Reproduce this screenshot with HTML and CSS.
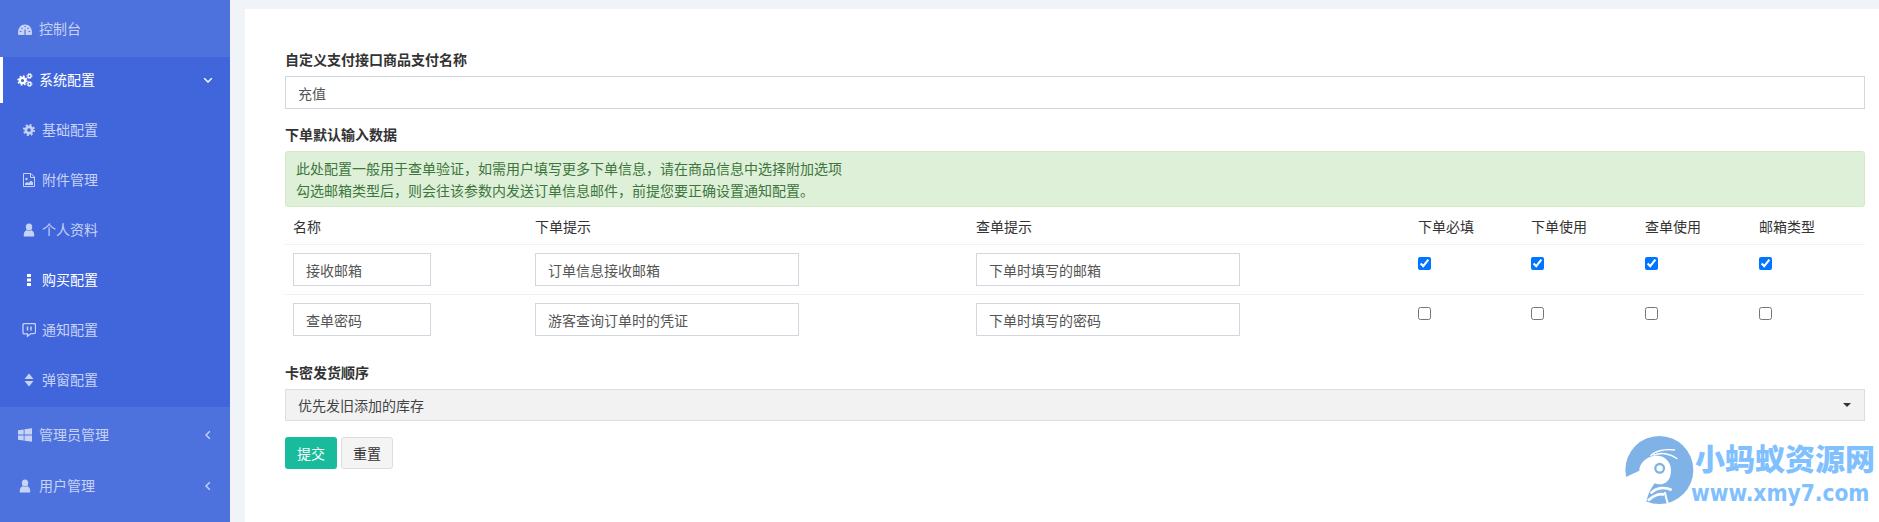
FILE: index.html
```html
<!DOCTYPE html>
<html lang="zh-CN">
<head>
<meta charset="utf-8">
<title>购买配置</title>
<link rel="stylesheet" href="styles.css">
</head>
<body>
<svg class="defs" width="0" height="0" aria-hidden="true">
  <symbol id="i-gear" viewBox="-1 -1 16 16">
    <circle cx="7" cy="7" r="3.6" fill="none" stroke="currentColor" stroke-width="3"/>
    <circle cx="7" cy="7" r="5.8" fill="none" stroke="currentColor" stroke-width="2.2" stroke-dasharray="2.3 2.25"/>
  </symbol>
  <symbol id="i-user" viewBox="0 0 14 14">
    <ellipse cx="7" cy="4" rx="3.2" ry="3.6" fill="currentColor"/>
    <path d="M2 13.5C1.5 13.5 1.8 10 2.6 8.8C3.2 7.9 4.2 7.2 5 7.2C6 8.2 8 8.2 9 7.2C9.8 7.2 10.8 7.9 11.4 8.8C12.2 10 12.500 13.5 12 13.5Z" fill="currentColor"/>
  </symbol>
  <symbol id="i-left" viewBox="0 0 10 10">
    <path d="M6.8 1.200L3 5L6.800 8.800" fill="none" stroke="currentColor" stroke-width="1.400"/>
  </symbol>
</svg>

<div class="app">
  <nav class="sidebar">
    <ul class="menu">
      <li class="item item-first">
        <svg class="ico" viewBox="0 0 14 14"><path d="M0 11C0 5.500 3 2.500 7 2.500s7 3 7 8.500c0 .8-.2 1.300-.6 2H.6C.2 12.300 0 11.800 0 11Z" fill="currentColor"/><path d="M7 13V7.500M1.800 9.500h1.600M3.500 5.800l1 1M10.500 5.800l-1 1M10.600 9.500h1.600M7 4v1.200" stroke="#4e72dd" stroke-width="1.200" fill="none"/></svg>
        <span class="text">控制台</span>
      </li>
      <li class="item item-open">
        <svg class="ico ico-cogs" viewBox="0 0 16 14"><use href="#i-gear" x="-.5" y="1.500" width="12" height="12"/><use href="#i-gear" x="9" y="-.5" width="7" height="7"/><use href="#i-gear" x="9" y="7.500" width="7" height="7"/></svg>
        <span class="text">系统配置</span>
        <svg class="caret" viewBox="0 0 10 10"><path d="M1.200 3.200L5 7L8.800 3.200" fill="none" stroke="currentColor" stroke-width="1.400"/></svg>
      </li>
      <li class="sub">
        <ul class="submenu">
          <li class="sub-item"><svg class="ico"><use href="#i-gear"/></svg><span class="text">基础配置</span></li>
          <li class="sub-item">
            <svg class="ico" viewBox="0 0 14 14"><path d="M1.500 .500H9L12.500 4V13.500H1.500Z" fill="none" stroke="currentColor"/><path d="M8.500 .500V4.500H12.500" fill="none" stroke="currentColor"/><circle cx="4.500" cy="6" r="1.200" fill="currentColor"/><path d="M3 12V10.500L5 9L6.500 10L9 7.500L11 9.500V12Z" fill="currentColor"/></svg>
            <span class="text">附件管理</span>
          </li>
          <li class="sub-item"><svg class="ico"><use href="#i-user"/></svg><span class="text">个人资料</span></li>
          <li class="sub-item sub-current">
            <svg class="ico" viewBox="0 0 14 14"><path d="M5 1H9V4H5ZM5 5.500H9V8.500H5ZM5 10H9V13H5Z" fill="currentColor"/></svg>
            <span class="text">购买配置</span>
          </li>
          <li class="sub-item">
            <svg class="ico" viewBox="0 0 14 14"><path d="M1 1.500Q1 .7 1.800 .7H12.500Q13.500 .7 13.500 1.700V9Q13.500 10 12.700 10.300L8.500 10.800L5.500 13.300V10.800H2.500Q1 10.800 1 9.300Z" fill="none" stroke="currentColor" stroke-width="1.300"/><path d="M5.500 3.500V7.500M9 3.500V7.500" stroke="currentColor" stroke-width="1.500"/></svg>
            <span class="text">通知配置</span>
          </li>
          <li class="sub-item">
            <svg class="ico" viewBox="0 0 14 14"><path d="M7 .500L11.500 6H2.500ZM2.500 8H11.500L7 13.500Z" fill="currentColor"/></svg>
            <span class="text">弹窗配置</span>
          </li>
        </ul>
      </li>
      <li class="item item-tall">
        <svg class="ico" viewBox="0 0 14 14"><path d="M0 2.200L5.700 1.400V6.600H0ZM6.500 1.300L14 .200V6.600H6.500ZM0 7.400H5.700V12.600L0 11.800ZM6.500 7.400H14V13.800L6.500 12.700Z" fill="currentColor"/></svg>
        <span class="text">管理员管理</span>
        <svg class="caret"><use href="#i-left"/></svg>
      </li>
      <li class="item">
        <svg class="ico"><use href="#i-user"/></svg>
        <span class="text">用户管理</span>
        <svg class="caret"><use href="#i-left"/></svg>
      </li>
    </ul>
  </nav>

  <main class="card">
    <form class="form">
      <div class="field field-name">
        <label class="label" for="pay-name">自定义支付接口商品支付名称</label>
        <input class="control" id="pay-name" type="text" value="充值">
      </div>

      <div class="field field-table">
        <div class="label">下单默认输入数据</div>
        <div class="alert">
          <div>此处配置一般用于查单验证，如需用户填写更多下单信息，请在商品信息中选择附加选项</div>
          <div>勾选邮箱类型后，则会往该参数内发送订单信息邮件，前提您要正确设置通知配置。</div>
        </div>
        <table class="table">
          <colgroup>
            <col class="col-name"><col class="col-hint"><col class="col-hint-wide"><col class="col-first"><col class="col-check"><col class="col-check"><col class="col-check">
          </colgroup>
          <thead>
            <tr><th>名称</th><th>下单提示</th><th>查单提示</th><th>下单必填</th><th>下单使用</th><th>查单使用</th><th>邮箱类型</th></tr>
          </thead>
          <tbody>
            <tr>
              <td><input class="control" type="text" value="接收邮箱"></td>
              <td><input class="control" type="text" value="订单信息接收邮箱"></td>
              <td><input class="control" type="text" value="下单时填写的邮箱"></td>
              <td><input class="check" type="checkbox" checked></td>
              <td><input class="check" type="checkbox" checked></td>
              <td><input class="check" type="checkbox" checked></td>
              <td><input class="check" type="checkbox" checked></td>
            </tr>
            <tr>
              <td><input class="control" type="text" value="查单密码"></td>
              <td><input class="control" type="text" value="游客查询订单时的凭证"></td>
              <td><input class="control" type="text" value="下单时填写的密码"></td>
              <td><input class="check" type="checkbox"></td>
              <td><input class="check" type="checkbox"></td>
              <td><input class="check" type="checkbox"></td>
              <td><input class="check" type="checkbox"></td>
            </tr>
          </tbody>
        </table>
      </div>

      <div class="field field-select">
        <label class="label" for="order">卡密发货顺序</label>
        <div class="select-wrap">
          <select class="select" id="order"><option>优先发旧添加的库存</option></select>
        </div>
      </div>

      <div class="actions">
        <button class="btn btn-submit" type="button">提交</button>
        <button class="btn btn-reset" type="button">重置</button>
      </div>
    </form>
  </main>
</div>

<div class="watermark">
  <svg class="wm-logo" viewBox="0 0 270 240" aria-hidden="true">
    <circle cx="118" cy="120" r="102" fill="#7fb2e6"/>
    <path d="M16 142L58 122C58 92 92 72 120 78C146 84 160 112 150 140C144 160 122 168 104 160C96 172 84 186 78 222C50 212 24 180 16 142Z" fill="#fff"/>
    <circle cx="119" cy="115" r="13" fill="none" stroke="#7fb2e6" stroke-width="7"/>
    <path d="M92 78C105 62 135 56 165 60M100 76C122 66 150 70 172 86" fill="none" stroke="#fff" stroke-width="4"/>
    <path d="M92 190C110 172 135 170 155 180M84 212C100 194 122 190 132 194" fill="none" stroke="#fff" stroke-width="8"/>
    <path d="M134 186L144 224" fill="none" stroke="#fff" stroke-width="6"/>
  </svg>
  <span class="wm-cn">小蚂蚁资源网</span>
  <span class="wm-en">www.xmy7.com</span>
</div>
</body>
</html>
```

FILE: styles.css
```css
* { box-sizing: border-box; }

html, body {
  margin: 0;
  height: 100%;
  overflow: hidden;
}

body {
  background: #f0f3f7;
  color: #333;
  font-family: "Noto Sans CJK SC", "Liberation Sans", sans-serif;
  font-size: 14px;
  line-height: 20px;
}

.defs { display: block; }

.app {
  display: flex;
  height: 522px;
}

/* Sidebar */
.sidebar {
  width: 230px;
  flex: none;
  background: #4e72dd;
  color: #c6d3f6;
  overflow: hidden;
}

.menu, .submenu {
  list-style: none;
  margin: 0;
  padding: 0;
}

.item {
  display: flex;
  align-items: center;
  gap: 7px;
  height: 46px;
  padding: 0 17px 0 18px;
}

.item-first { height: 57px; }
.item-tall { height: 56px; }

.item-open {
  background: #4166dc;
  color: #fff;
  border-left: 3px solid #fff;
  padding-left: 15px;
}

.sub {
  background: #4166dc;
  padding: 2px 0;
}

.sub-item {
  display: flex;
  align-items: center;
  gap: 6px;
  height: 50px;
  padding-left: 22px;
}

.sub-current { color: #fff; }

.text { padding-bottom: 2px; }

.ico {
  width: 14px;
  height: 14px;
  flex: none;
}

.ico-cogs {
  width: 16px;
  margin: 0 -1px;
}

.caret {
  width: 10px;
  height: 10px;
  flex: none;
  margin-left: auto;
}

/* Content */
.card {
  flex: 1;
  min-width: 0;
  margin: 9px 0 0 15px;
  padding: 40px 14px 0 40px;
  background: #fff;
}

.field-name { margin-bottom: 15px; }
.field-table { margin-bottom: 18px; }
.field-select { margin-bottom: 16px; }

.label {
  display: block;
  margin-bottom: 7px;
  font-weight: 700;
  color: #333;
}

.control {
  display: block;
  width: 100%;
  height: 33px;
  padding: 6px 12px;
  border: 1px solid #d2d6de;
  border-radius: 0;
  background: #fff;
  color: #555;
  font: inherit;
}

.alert {
  height: 56px;
  padding: 5px 10px;
  border: 1px solid #d6e9c6;
  border-radius: 3px;
  background: #dff0d8;
  color: #3c763d;
  line-height: 22px;
}

.table {
  width: 100%;
  table-layout: fixed;
  border-collapse: separate;
  border-spacing: 0;
}

.col-name { width: 242px; }
.col-hint { width: 441px; }
.col-hint-wide { width: 442px; }
.col-first { width: 113px; }
.col-check { width: 114px; }

.table th {
  height: 37px;
  padding: 8px;
  font-weight: 400;
  text-align: left;
  vertical-align: middle;
}

.table td {
  padding: 8px;
  border-top: 1px solid #f2f2f2;
  vertical-align: top;
}

.table td:nth-child(1) .control { width: 138px; }
.table td:nth-child(2) .control,
.table td:nth-child(3) .control { width: 264px; }

.check {
  display: block;
  margin: 4px 0 0;
}

.select-wrap { position: relative; }

.select-wrap::after {
  content: "";
  position: absolute;
  top: 14px;
  right: 14px;
  border: 4px solid transparent;
  border-top-color: #333;
  border-bottom: 0;
  pointer-events: none;
}

.select {
  display: block;
  width: 100%;
  height: 32px;
  padding: 0 12px;
  border: 1px solid #ddd;
  border-radius: 0;
  background: #f2f2f2;
  color: #444;
  font: inherit;
  appearance: none;
}

.actions {
  display: flex;
  gap: 4px;
}

.btn {
  width: 52px;
  height: 32px;
  padding: 0;
  border: 1px solid transparent;
  border-radius: 3px;
  font: inherit;
}

.btn-submit {
  background: #18bc9c;
  color: #fff;
}

.btn-reset {
  background: #f4f4f4;
  border-color: #ddd;
  color: #333;
}

/* Watermark overlay */
.watermark {
  position: absolute;
  left: 1620px;
  top: 430px;
  width: 259px;
  height: 92px;
  pointer-events: none;
}

.wm-logo {
  position: absolute;
  left: 0;
  top: 0;
  width: 90px;
  height: 80px;
}

.wm-cn {
  position: absolute;
  left: 75px;
  top: 7px;
  font-size: 30px;
  line-height: 40px;
  font-weight: 900;
  color: #80c0ff;
  white-space: nowrap;
}

.wm-en {
  position: absolute;
  left: 71px;
  top: 47px;
  font-family: "DejaVu Sans Condensed", "DejaVu Sans", sans-serif;
  font-size: 22.500px;
  font-stretch: condensed;
  line-height: 32px;
  font-weight: 700;
  color: #80c0ff;
  white-space: nowrap;
}
```
